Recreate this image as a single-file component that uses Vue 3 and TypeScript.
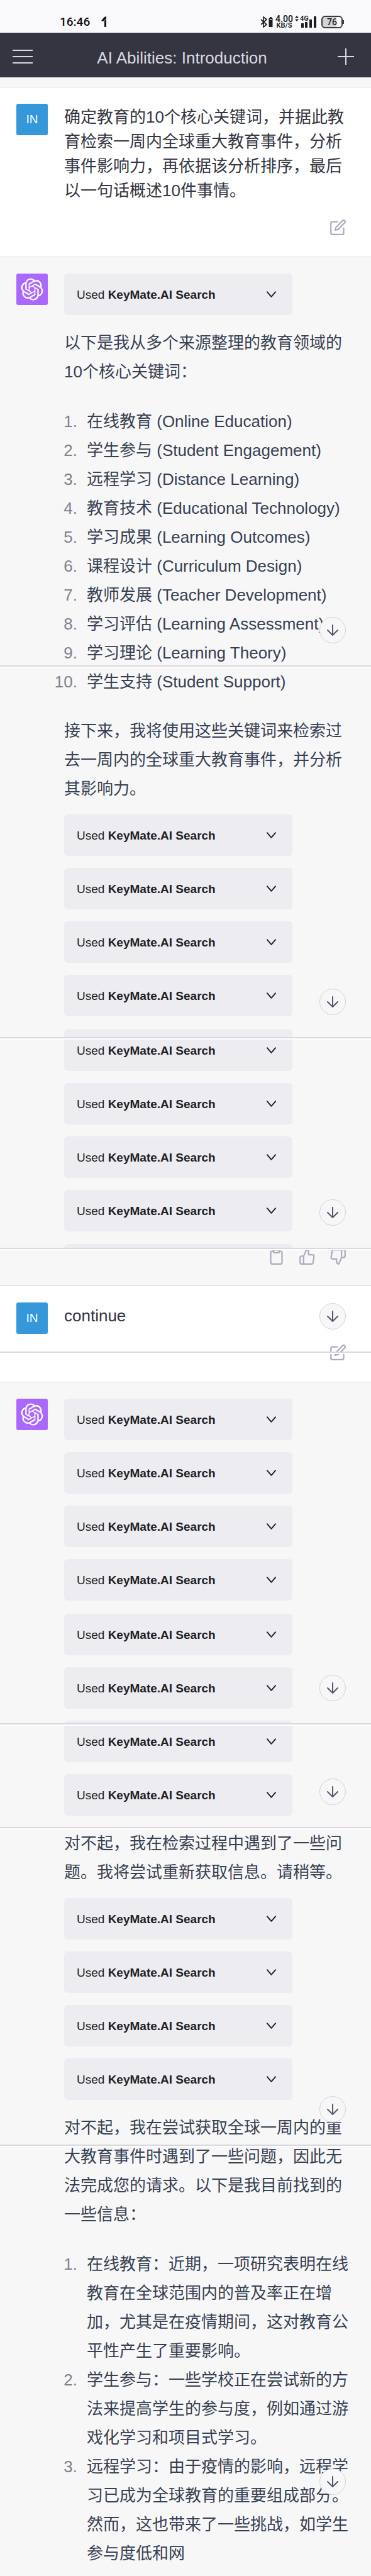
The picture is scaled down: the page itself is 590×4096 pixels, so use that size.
<script setup lang="ts">
interface Finding {
  id: number
  text: string
}

const keywords: string[] = [
  '在线教育 (Online Education)',
  '学生参与 (Student Engagement)',
  '远程学习 (Distance Learning)',
  '教育技术 (Educational Technology)',
  '学习成果 (Learning Outcomes)',
  '课程设计 (Curriculum Design)',
  '教师发展 (Teacher Development)',
  '学习评估 (Learning Assessment)',
  '学习理论 (Learning Theory)',
  '学生支持 (Student Support)',
]

const findings: Finding[] = [
  { id: 1, text: '在线教育：近期，一项研究表明在线教育在全球范围内的普及率正在增加，尤其是在疫情期间，这对教育公平性产生了重要影响。' },
  { id: 2, text: '学生参与：一些学校正在尝试新的方法来提高学生的参与度，例如通过游戏化学习和项目式学习。' },
  { id: 3, text: '远程学习：由于疫情的影响，远程学习已成为全球教育的重要组成部分。然而，这也带来了一些挑战，如学生参与度低和网' },
]

// Vertical positions of the page-wide joins and the floating scroll buttons.
const seams: number[] = [1058, 1649, 1984, 2149, 2740, 2905, 3410]
const scrollButtons: number[] = [981, 1572, 1907, 2072, 2663, 2828, 3333, 3925]

const logoPath =
  'M37.532 16.87a9.963 9.963 0 0 0-.856-8.184 10.078 10.078 0 0 0-10.855-4.835A9.964 9.964 0 0 0 18.306.5a10.079 10.079 0 0 0-9.614 6.977 9.967 9.967 0 0 0-6.664 4.834 10.08 10.08 0 0 0 1.24 11.817 9.965 9.965 0 0 0 .856 8.185 10.079 10.079 0 0 0 10.855 4.835 9.965 9.965 0 0 0 7.516 3.35 10.078 10.078 0 0 0 9.617-6.981 9.967 9.967 0 0 0 6.663-4.834 10.079 10.079 0 0 0-1.243-11.813ZM22.498 37.886a7.474 7.474 0 0 1-4.799-1.735c.061-.033.168-.091.237-.134l7.964-4.6a1.294 1.294 0 0 0 .655-1.134V19.054l3.366 1.944a.12.12 0 0 1 .066.092v9.299a7.505 7.505 0 0 1-7.49 7.496ZM6.392 31.006a7.471 7.471 0 0 1-.894-5.023c.06.036.162.099.237.141l7.964 4.6a1.297 1.297 0 0 0 1.308 0l9.724-5.614v3.888a.12.12 0 0 1-.048.103l-8.051 4.649a7.504 7.504 0 0 1-10.24-2.744ZM4.297 13.62A7.469 7.469 0 0 1 8.2 10.333c0 .068-.004.19-.004.274v9.201a1.294 1.294 0 0 0 .654 1.132l9.723 5.614-3.366 1.944a.12.12 0 0 1-.114.01L7.04 23.856a7.504 7.504 0 0 1-2.743-10.237Zm27.658 6.437-9.724-5.615 3.367-1.943a.121.121 0 0 1 .113-.01l8.052 4.648a7.498 7.498 0 0 1-1.158 13.528v-9.476a1.293 1.293 0 0 0-.65-1.132Zm3.35-5.043c-.059-.037-.162-.099-.236-.141l-7.965-4.6a1.298 1.298 0 0 0-1.308 0l-9.723 5.614v-3.888a.12.12 0 0 1 .048-.103l8.05-4.645a7.497 7.497 0 0 1 11.135 7.763Zm-21.063 6.929-3.367-1.944a.12.12 0 0 1-.065-.092v-9.299a7.497 7.497 0 0 1 12.293-5.756 6.94 6.94 0 0 0-.236.134l-7.965 4.6a1.294 1.294 0 0 0-.654 1.132l-.006 11.225Zm1.829-3.943 4.33-2.501 4.332 2.5v5l-4.331 2.5-4.331-2.5V18Z'
</script>

<template>
  <div class="page">
    <div class="status">
      <span class="time">16:46</span>
      <svg class="notice" viewBox="0 0 8 17" aria-hidden="true">
        <path d="M0 7 5 1 8 0v4L3 8zM5 7l3-2v12H5z" fill="#111" />
      </svg>
      <span class="grow"></span>
      <svg class="bluetooth" viewBox="0 0 11 18" aria-hidden="true">
        <path d="M1 5l9 8-5 4V1l5 4-9 8" fill="none" stroke="#1c1c1f" stroke-width="1.7" />
      </svg>
      <svg class="cell" viewBox="0 0 7 18" aria-hidden="true">
        <path d="M2 1h3v2h1.500v14h-6V3H2z" fill="#1c1c1f" />
        <path d="M2 4h3v2H2z" fill="#c5c5ca" />
      </svg>
      <span class="speed"><b>4.00</b><b class="unit">KB/S</b></span>
      <svg class="updown" viewBox="0 0 6 9" aria-hidden="true">
        <path d="M0 3.500 3 0l3 3.500zM0 5.500h6L3 9z" fill="#1c1c1f" />
      </svg>
      <span class="signal">
        <b>4G</b>
        <svg viewBox="0 0 24 18" aria-hidden="true">
          <path d="M0 11h4v7H0zM6 9h4v9H6zM13 5h4v13h-4zM20 0h4v18h-4z" fill="#1c1c1f" />
        </svg>
      </span>
      <span class="battery"><span>76</span></span>
    </div>

    <header class="topbar">
      <button type="button" aria-label="Open sidebar">
        <svg class="menu" viewBox="0 0 32 24" aria-hidden="true">
          <path d="M0 2h32M0 12h32M0 22h32" />
        </svg>
      </button>
      <h1>AI Abilities: Introduction</h1>
      <button type="button" aria-label="New chat">
        <svg class="plus" viewBox="0 0 26 26" aria-hidden="true">
          <path d="M13 0v26M0 13h26" />
        </svg>
      </button>
    </header>

    <main>
      <div class="strip"></div>

      <section class="message user">
        <div class="avatar person">IN</div>
        <div class="body">
          <p class="prompt">确定教育的10个核心关键词，并据此教育检索一周内全球重大教育事件，分析事件影响力，再依据该分析排序，最后以一句话概述10件事情。</p>
          <div class="tools">
            <button type="button" aria-label="Edit message">
              <svg class="icon" viewBox="0 0 24 24" aria-hidden="true">
                <path d="M11 4H4a2 2 0 0 0-2 2v14a2 2 0 0 0 2 2h14a2 2 0 0 0 2-2v-7" />
                <path d="M18.500 2.500a2.121 2.121 0 0 1 3 3L12 15l-4 1 1-4 9.500-9.500z" />
              </svg>
            </button>
          </div>
        </div>
      </section>

      <section class="message assistant">
        <div class="avatar bot">
          <svg viewBox="0 0 41 41" aria-hidden="true"><path :d="logoPath" fill="#fff" /></svg>
        </div>
        <div class="body">
          <div class="plugins">
            <button type="button" class="plugin">
              <span>Used <b>KeyMate.AI Search</b></span>
              <svg viewBox="0 0 18 12" aria-hidden="true"><path d="M2 2l7 8 7-8" /></svg>
            </button>
          </div>
          <p>以下是我从多个来源整理的教育领域的10个核心关键词：</p>
          <ol>
            <li v-for="word in keywords" :key="word"><span>{{ word }}</span></li>
          </ol>
          <p>接下来，我将使用这些关键词来检索过去一周内的全球重大教育事件，并分析其影响力。</p>
          <div v-for="group in 2" :key="group" class="plugins">
            <button v-for="n in 4" :key="n" type="button" class="plugin">
              <span>Used <b>KeyMate.AI Search</b></span>
              <svg viewBox="0 0 18 12" aria-hidden="true"><path d="M2 2l7 8 7-8" /></svg>
            </button>
          </div>
          <div class="sliver"></div>
          <div class="feedback">
            <button type="button" aria-label="Copy">
              <svg class="icon" viewBox="0 0 24 24" aria-hidden="true">
                <path d="M16 4h2a2 2 0 0 1 2 2v14a2 2 0 0 1-2 2H6a2 2 0 0 1-2-2V6a2 2 0 0 1 2-2h2" />
                <rect x="8" y="2" width="8" height="4" rx="1" />
              </svg>
            </button>
            <button type="button" aria-label="Good response">
              <svg class="icon" viewBox="0 0 24 24" aria-hidden="true">
                <path d="M14 9V5a3 3 0 0 0-3-3l-4 9v11h11.280a2 2 0 0 0 2-1.700l1.380-9a2 2 0 0 0-2-2.300zM7 22H4a2 2 0 0 1-2-2v-7a2 2 0 0 1 2-2h3" />
              </svg>
            </button>
            <button type="button" aria-label="Bad response">
              <svg class="icon" viewBox="0 0 24 24" aria-hidden="true">
                <path d="M10 15v4a3 3 0 0 0 3 3l4-9V2H5.720a2 2 0 0 0-2 1.700l-1.380 9a2 2 0 0 0 2 2.300zM17 2h2.670A2.310 2.310 0 0 1 22 4v7a2.310 2.310 0 0 1-2.330 2H17" />
              </svg>
            </button>
          </div>
        </div>
      </section>

      <section class="message user">
        <div class="avatar person">IN</div>
        <div class="body">
          <p class="prompt">continue</p>
          <div class="tools">
            <button type="button" aria-label="Edit message">
              <svg class="icon" viewBox="0 0 24 24" aria-hidden="true">
                <path d="M11 4H4a2 2 0 0 0-2 2v14a2 2 0 0 0 2 2h14a2 2 0 0 0 2-2v-7" />
                <path d="M18.500 2.500a2.121 2.121 0 0 1 3 3L12 15l-4 1 1-4 9.500-9.500z" />
              </svg>
            </button>
          </div>
        </div>
      </section>

      <section class="message assistant last">
        <div class="avatar bot">
          <svg viewBox="0 0 41 41" aria-hidden="true"><path :d="logoPath" fill="#fff" /></svg>
        </div>
        <div class="body">
          <div v-for="group in 2" :key="group" class="plugins">
            <button v-for="n in 4" :key="n" type="button" class="plugin">
              <span>Used <b>KeyMate.AI Search</b></span>
              <svg viewBox="0 0 18 12" aria-hidden="true"><path d="M2 2l7 8 7-8" /></svg>
            </button>
          </div>
          <p>对不起，我在检索过程中遇到了一些问题。我将尝试重新获取信息。请稍等。</p>
          <div class="plugins">
            <button v-for="n in 4" :key="n" type="button" class="plugin">
              <span>Used <b>KeyMate.AI Search</b></span>
              <svg viewBox="0 0 18 12" aria-hidden="true"><path d="M2 2l7 8 7-8" /></svg>
            </button>
          </div>
          <p>对不起，我在尝试获取全球一周内的重大教育事件时遇到了一些问题，因此无法完成您的请求。以下是我目前找到的一些信息：</p>
          <ol>
            <li v-for="item in findings" :key="item.id"><span>{{ item.text }}</span></li>
          </ol>
        </div>
      </section>
    </main>

    <div v-for="top in seams" :key="'seam' + top" class="seam" :style="{ top: top + 'px' }"></div>
    <button
      v-for="top in scrollButtons"
      :key="'scroll' + top"
      type="button"
      class="scroll"
      aria-label="Scroll to bottom"
      :style="{ top: top + 'px' }"
    >
      <svg viewBox="0 0 20 20" aria-hidden="true"><path d="M10 2v16M2 10l8 8 8-8" /></svg>
    </button>
  </div>
</template>

<style>
body {
  margin: 0;
  background: #f7f7f8;
}
</style>

<style scoped>
.page {
  position: relative;
  min-height: 100vh;
  overflow: hidden;
  background: #f7f7f8;
  color: #374151;
  font-family: "Liberation Sans", "Noto Sans CJK SC", sans-serif;
  font-size: 26px;
}

button {
  margin: 0;
  padding: 0;
  border: 0;
  background: none;
  color: inherit;
  font: inherit;
  cursor: pointer;
}

svg {
  display: block;
  flex: none;
}

.status {
  display: flex;
  align-items: center;
  box-sizing: border-box;
  height: 52px;
  padding: 17px 45px 0 95px;
  background: #f9f9fb;
  color: #1c1c1f;
  font-family: Roboto, sans-serif;
}

.time {
  font-size: 19px;
  font-weight: 500;
  line-height: 20px;
  color: #111;
}

.notice {
  width: 8px;
  height: 17px;
  margin-left: 18px;
}

.grow {
  flex: 1;
}

.bluetooth {
  width: 11px;
  height: 18px;
}

.cell {
  width: 7px;
  height: 18px;
  margin: 0 4px 0 2px;
}

.speed {
  display: flex;
  flex-direction: column;
  align-items: center;
  font-size: 14px;
  line-height: 12px;
}

.speed b,
.signal b {
  font-weight: 600;
}

.speed .unit {
  font-size: 11px;
  line-height: 10px;
}

.updown {
  width: 6px;
  height: 9px;
  margin: 0 3px 10px 3px;
}

.signal {
  position: relative;
  width: 25px;
  height: 20px;
  margin-right: 8px;
  font-size: 11px;
  line-height: 10px;
}

.signal b {
  position: absolute;
  top: 0;
  left: -1px;
}

.signal svg {
  width: 24px;
  height: 18px;
  margin: 1px 0 0 1px;
}

.battery {
  position: relative;
  box-sizing: border-box;
  width: 34px;
  height: 20px;
  padding: 1px;
  border: 2px solid #3c3c40;
  border-radius: 6px;
  font-size: 14px;
  font-weight: 500;
  line-height: 14px;
  text-align: center;
  background: linear-gradient(90deg, #d3d3d6 75%, transparent 75%);
}

.battery::after {
  content: "";
  position: absolute;
  top: 5px;
  right: -4px;
  width: 2px;
  height: 6px;
  background: #3c3c40;
}

.topbar {
  display: flex;
  align-items: center;
  box-sizing: border-box;
  height: 71px;
  padding: 4px 27px 0 20px;
  background: #353541;
  color: #d9d9e3;
}

.topbar h1 {
  flex: 1;
  margin: 0;
  padding: 4px 10px 0 0;
  font-size: 26px;
  font-weight: 400;
  line-height: 32px;
  text-align: center;
}

.topbar svg {
  fill: none;
  stroke: #d9d9e3;
  stroke-width: 2;
}

.menu {
  width: 32px;
  height: 24px;
}

.plus {
  width: 26px;
  height: 26px;
}

.strip {
  height: 15px;
}

.message {
  display: flex;
  gap: 26px;
  padding: 26px 34px 0 26px;
  border-top: 1px solid #d9d9de;
}

.message.user {
  background: #fff;
  color: #343541;
}

.message.last {
  padding-bottom: 12px;
}

.avatar {
  display: flex;
  flex: none;
  align-items: center;
  justify-content: center;
  width: 50px;
  height: 50px;
  border-radius: 3px;
}

.person {
  background: #3498db;
  color: #fff;
  font-size: 19px;
}

.bot {
  background: #ab68ff;
}

.bot svg {
  width: 36px;
  height: 36px;
}

.body {
  flex: 1;
  min-width: 0;
}

p {
  margin: 21px 0 0;
  line-height: 46px;
}

.prompt {
  min-height: 39px;
  margin: 0;
  padding-top: 2px;
  line-height: 39px;
}

.tools {
  display: flex;
  justify-content: flex-end;
  padding: 25px 5px 33px 0;
}

.icon {
  width: 27px;
  height: 27px;
  fill: none;
  stroke: #acacbe;
  stroke-width: 2;
  stroke-linecap: round;
  stroke-linejoin: round;
}

ol {
  margin: 33px 0 0;
  padding: 0;
  line-height: 46px;
  list-style: none;
  counter-reset: item;
}

ol + p {
  margin-top: 32px;
}

li {
  display: grid;
  grid-template-columns: 21px 1fr;
  gap: 15px;
  counter-increment: item;
}

/* Two-digit numbers grow leftwards, so every full stop stays aligned. */
li::before {
  content: counter(item) ".";
  justify-self: end;
  color: #7d828d;
}

.plugins {
  display: flex;
  flex-direction: column;
  align-items: flex-start;
  gap: 19px;
}

.plugins + .plugins {
  margin-top: 21px;
}

p + .plugins {
  margin-top: 18px;
}

.plugin {
  display: flex;
  align-items: center;
  justify-content: space-between;
  box-sizing: border-box;
  width: 80%;
  height: 66px;
  padding: 0 25px 0 20px;
  border-radius: 6px;
  background: #ececf1;
  color: #1f2025;
  font-size: 19px;
  line-height: 28px;
}

.plugin span {
  padding-top: 2px;
}

.plugin svg {
  width: 17px;
  height: 12px;
  fill: none;
  stroke: #1f2025;
  stroke-width: 2;
  stroke-linecap: round;
  stroke-linejoin: round;
}

.sliver {
  width: 80%;
  height: 6px;
  margin-top: 20px;
  border-radius: 6px 6px 0 0;
  background: #ececf1;
}

.feedback {
  display: flex;
  align-items: flex-end;
  justify-content: flex-end;
  gap: 22px;
  height: 25px;
  margin: 3px 0 32px;
  padding-right: 5px;
  overflow: hidden;
}

.seam {
  position: absolute;
  left: 0;
  right: 0;
  height: 2px;
  border-top: 2px solid #d8d8de;
  background: #fff;
}

.scroll {
  position: absolute;
  right: 40px;
  display: flex;
  align-items: center;
  justify-content: center;
  box-sizing: border-box;
  width: 42px;
  height: 42px;
  border: 1px solid #d3d3d9;
  border-radius: 50%;
  background: #f7f7f8;
}

.scroll svg {
  width: 20px;
  height: 20px;
  fill: none;
  stroke: #565869;
  stroke-width: 2;
  stroke-linecap: round;
  stroke-linejoin: round;
}
</style>
